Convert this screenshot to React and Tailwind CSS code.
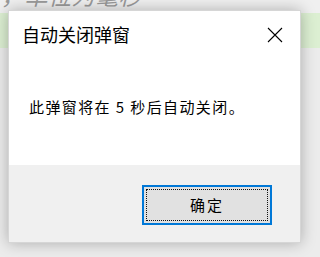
export default function App() {
  return (
    <div className="relative w-[320px] h-[257px] overflow-hidden bg-[#ececec]" style={{ fontFamily: '"Noto Sans CJK SC", "Noto Sans", sans-serif' }}>
      {/* page behind the dialog */}
      <div className="h-[13px] bg-[#f0f0f0] overflow-hidden">
        <p className="-mt-[17px] pl-[1px] text-[23px] leading-[24px] italic text-[#9a9a9a] tracking-[0.5px]">，单位为毫秒</p>
      </div>
      <div className="h-[35px] bg-[#dcefd2]" />

      {/* dialog window */}
      <div className="absolute left-[8px] top-[10px] w-[293px] h-[233px] flex flex-col bg-[#f0f0f0] border border-[#d6d6d6] shadow-[0_0_14px_rgba(0,0,0,0.28)]">
        <div className="h-[154px] bg-white flex flex-col">
          <div className="flex items-start justify-between pl-[13px] pr-[17px] pt-[12px]">
            <h1 className="text-[18px] leading-[22px] text-black">自动关闭弹窗</h1>
            <svg width="16" height="16" viewBox="0 0 16 16" className="mt-[4px]">
              <path d="M1 1 L15 15 M15 1 L1 15" stroke="#000" strokeWidth="1.1" fill="none" />
            </svg>
          </div>
          <p className="mt-[53px] pl-[20px] text-[15px] leading-[18px] tracking-[1.4px] text-black">
            此弹窗将在 5 秒后自动关闭。
          </p>
        </div>
        <div className="flex-1 flex justify-end items-start pt-[20px] pr-[28px]">
          <button className="w-[130px] h-[40px] border-2 border-[#0078d7] bg-[#e1e1e1] p-[2px]">
            <div className="w-full h-full border border-dotted border-[#111] flex items-center justify-center text-[15px] tracking-[2px] text-black">
              确定
            </div>
          </button>
        </div>
      </div>
    </div>
  );
}
